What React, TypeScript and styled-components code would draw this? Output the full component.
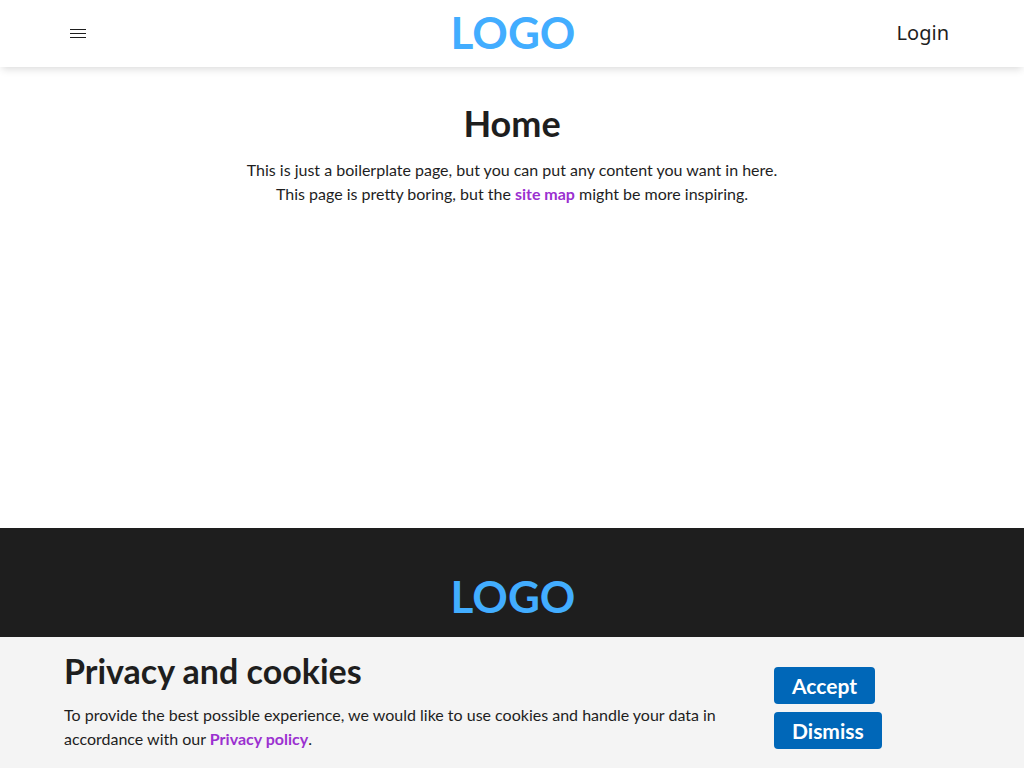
import React from "react";
import styled, { createGlobalStyle } from "styled-components";

const ink = "#1e1e1e";

const GlobalStyle = createGlobalStyle`
  *, *::before, *::after { box-sizing: border-box; }
  body {
    margin: 0;
    background: #fff;
    color: ${ink};
    font-family: Lato, "Open Sans", sans-serif;
    font-size: 16px;
    line-height: 24px;
  }
`;

const Page = styled.div`
  min-height: 100vh;
  display: flex;
  flex-direction: column;
`;

const Header = styled.header`
  display: grid;
  grid-template-columns: 1fr auto 1fr;
  align-items: center;
  height: 67px;
  padding: 0 64px;
  background: #fff;
  box-shadow: 0 4px 8px -2px rgba(0, 0, 0, 0.15);
`;

const MenuButton = styled.button`
  display: flex;
  justify-self: start;
  padding: 6px;
  border: 0;
  background: none;
  color: ${ink};
  cursor: pointer;
`;

const Logo = styled.a`
  padding: 0 0 3px 2px;
  color: #42adff;
  font-size: 44px;
  font-weight: 700;
  line-height: 64px;
  text-decoration: none;
`;

const LoginLink = styled.a`
  justify-self: end;
  padding: 0 11px 2px;
  color: ${ink};
  font-family: "Noto Sans", "Open Sans", sans-serif;
  font-size: 20px;
  text-decoration: none;
`;

const Main = styled.main`
  flex: 1;
  padding: 32px 64px;
  text-align: center;
`;

const Title = styled.h1`
  margin: 0 0 10px;
  font-size: 36px;
  font-weight: 700;
  line-height: 49px;
`;

const Text = styled.p`
  margin: 0;
`;

const TextLink = styled.a`
  color: #9b30d0;
  font-weight: 700;
  text-decoration: none;
`;

const Footer = styled.footer`
  display: flex;
  justify-content: center;
  align-items: flex-start;
  height: 240px;
  padding: 36px 64px;
  background: ${ink};
`;

const Banner = styled.section`
  position: fixed;
  inset: auto 0 0;
  display: flex;
  gap: 48px;
  padding: 10px 64px 16px;
  background: #f4f4f4;
`;

const BannerText = styled.div`
  flex: 1;
  padding-bottom: 1px;
`;

const BannerTitle = styled.h2`
  margin: 0 0 8px;
  font-size: 34px;
  font-weight: 700;
  line-height: 48px;
`;

const Actions = styled.div`
  display: flex;
  flex-direction: column;
  align-items: flex-start;
  gap: 8px;
  width: 186px;
  padding-top: 20px;
`;

const Button = styled.button`
  height: 37px;
  padding: 0 18px;
  border: 0;
  border-radius: 4px;
  background: #0067b8;
  color: #fff;
  font-family: inherit;
  font-size: 21px;
  font-weight: 700;
  line-height: 37px;
  cursor: pointer;
`;

export default function App() {
  return (
    <>
      <GlobalStyle />
      <Page>
        <Header>
          <MenuButton type="button" aria-label="Menu">
            <svg width="16" height="16" viewBox="0 0 16 16" fill="currentColor" aria-hidden="true">
              <path d="M0 3h16v1H0zM0 7h16v1H0zM0 11h16v1H0z" />
            </svg>
          </MenuButton>
          <Logo href="#home">LOGO</Logo>
          <LoginLink href="#login">Login</LoginLink>
        </Header>
        <Main>
          <Title>Home</Title>
          <Text>
            This is just a boilerplate page, but you can put any content you want in here.
          </Text>
          <Text>
            This page is pretty boring, but the <TextLink href="#sitemap">site map</TextLink> might
            be more inspiring.
          </Text>
        </Main>
        <Footer>
          <Logo href="#home">LOGO</Logo>
        </Footer>
      </Page>
      <Banner aria-labelledby="privacy-title">
        <BannerText>
          <BannerTitle id="privacy-title">Privacy and cookies</BannerTitle>
          <Text>
            To provide the best possible experience, we would like to use cookies and handle your
            data in accordance with our <TextLink href="#privacy">Privacy policy</TextLink>.
          </Text>
        </BannerText>
        <Actions>
          <Button type="button">Accept</Button>
          <Button type="button">Dismiss</Button>
        </Actions>
      </Banner>
    </>
  );
}
